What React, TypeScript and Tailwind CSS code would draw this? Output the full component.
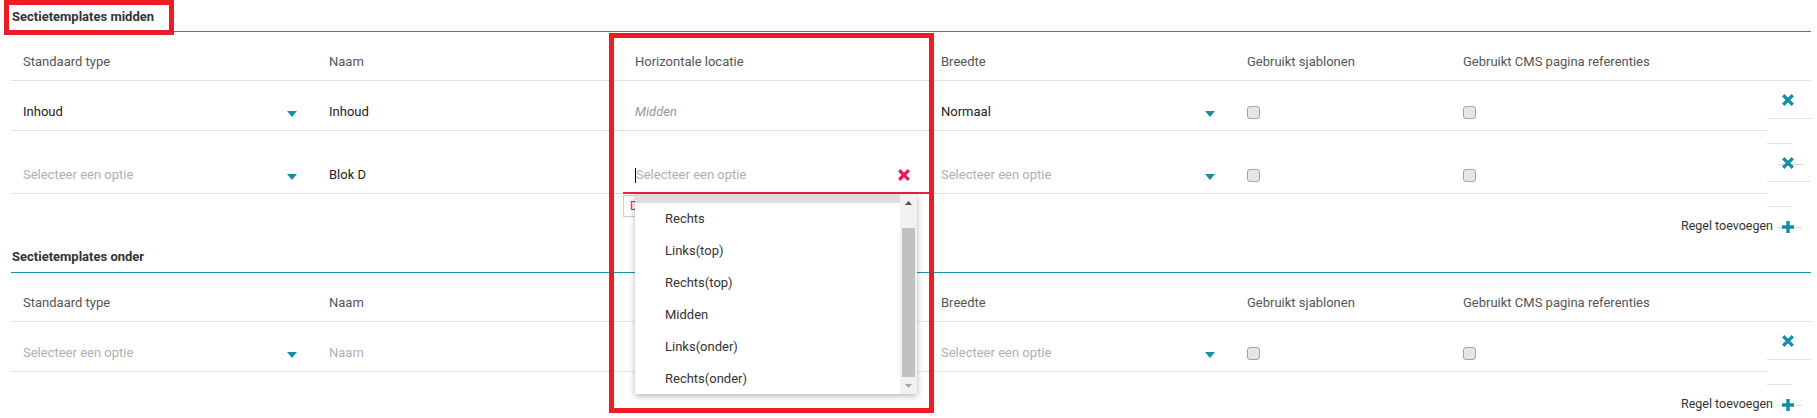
const HEADERS = [
  "Standaard type",
  "Naam",
  "Horizontale locatie",
  "Breedte",
  "Gebruikt sjablonen",
  "Gebruikt CMS pagina referenties",
];

const WIDTHS = ["w-[306px]", "w-[306px]", "w-[306px]", "w-[306px]", "w-[216px]", "w-[316px]"];

const OPTIONS = ["Links", "Rechts", "Links(top)", "Rechts(top)", "Midden", "Links(onder)", "Rechts(onder)"];

function Caret() {
  return (
    <span className="flex h-[20px] items-center pt-[3px]">
      <svg width="10" height="6" viewBox="0 0 10 6">
        <path d="M0 0h10L5 6z" fill="#178ea8" />
      </svg>
    </span>
  );
}

function TimesIcon({ color = "#178ea8" }: { color?: string }) {
  return (
    <svg width="12" height="12" viewBox="0 0 12 12" className="relative">
      <path d="M2.4 2.4l7.2 7.2M9.6 2.4l-7.2 7.2" stroke={color} strokeWidth="3.4" strokeLinecap="square" />
    </svg>
  );
}

function PlusIcon() {
  return (
    <svg width="12" height="12" viewBox="0 0 12 12" className="relative">
      <path d="M0 6h12M6 0v12" stroke="#178ea8" strokeWidth="3.4" />
    </svg>
  );
}

function Checkbox() {
  return (
    <span className="flex h-[20px] items-center">
      <span className="block h-[13px] w-[13px] rounded-[3px] border border-[#a4a4a4] bg-[#e6e6e6]" />
    </span>
  );
}

function Cell({ w, children, className = "" }: { w: string; children?: React.ReactNode; className?: string }) {
  return (
    <div className={`${w} flex h-full items-end justify-between border-b pb-[8px] pl-[12px] pr-[20px] leading-[20px] ${className}`}>
      {children}
    </div>
  );
}

function SelectCell({ w, value }: { w: string; value?: string }) {
  return (
    <Cell w={w} className="border-[#e0e0e0]">
      <span className={value ? "text-[#222]" : "text-[#b0b0b0]"}>{value ?? "Selecteer een optie"}</span>
      <Caret />
    </Cell>
  );
}

function CheckCell({ w }: { w: string }) {
  return (
    <Cell w={w} className="border-[#e0e0e0]">
      <Checkbox />
    </Cell>
  );
}

function SectionTitle({ title, first }: { title: string; first?: boolean }) {
  return (
    <>
      <div
        className={`flex items-end pl-[1px] font-bold leading-[20px] text-[#333] ${first ? "h-[31px] pb-[4px]" : "h-[26px] pb-[5px]"}`}
      >
        {title}
      </div>
      <div className="h-px bg-[#178ea8]" />
    </>
  );
}

function HeaderRow() {
  return (
    <div className="flex h-[49px] border-b border-[#e0e0e0]">
      {HEADERS.map((h, i) => (
        <div key={h} className={`${WIDTHS[i]} flex items-end pb-[8px] pl-[12px] leading-[20px] text-[#555]`}>
          {h}
        </div>
      ))}
    </div>
  );
}

function DeleteColumn({ count }: { count: number }) {
  return (
    <div className="flex w-[44px] flex-col">
      {Array.from({ length: count }).map((_, i) => (
        <div key={i}>
          <div className="relative flex h-[37px] items-center pl-[15px]">
            {i > 0 && <div className="absolute left-[11px] top-[20px] h-px w-[25px] bg-[#dcdcdc]" />}
            <TimesIcon />
          </div>
          <div className="h-px bg-[#e0e0e0]" />
          <div className="h-[24px]" />
          <div className="h-px w-[24px] bg-[#e0e0e0]" />
        </div>
      ))}
    </div>
  );
}

function AddRow() {
  return (
    <div className="flex h-[39px] items-center justify-end">
      <span className="text-[12.5px] text-[#333]">Regel toevoegen</span>
      <span className="relative ml-[9px] mr-[17px] flex">
        <span className="absolute left-[-5px] top-[6px] h-px w-[25px] bg-[#dcdcdc]" />
        <PlusIcon />
      </span>
    </div>
  );
}

function Dropdown() {
  return (
    <div className="absolute left-[12px] top-full z-20 flex h-[200px] w-[282px] bg-white shadow-[0_2px_6px_rgba(0,0,0,0.3)]">
      <div className="flex-1 overflow-hidden">
        <div className="-mt-[23px]">
          {OPTIONS.map((o, i) => (
            <div
              key={o}
              className={`flex h-[32px] items-center pl-[30px] text-[#333] ${i === 0 ? "bg-[#dddddd]" : ""}`}
            >
              {o}
            </div>
          ))}
        </div>
      </div>
      <div className="flex w-[17px] flex-col bg-[#f1f1f1]">
        <div className="flex h-[17px] items-center justify-center">
          <svg width="7" height="4" viewBox="0 0 7 4">
            <path d="M0 4h7L3.5 0z" fill="#505050" />
          </svg>
        </div>
        <div className="flex-1 px-[2px]">
          <div className="mt-[17px] h-[149px] bg-[#c1c1c1]" />
        </div>
        <div className="flex h-[17px] items-center justify-center">
          <svg width="7" height="4" viewBox="0 0 7 4">
            <path d="M0 0h7L3.5 4z" fill="#a3a3a3" />
          </svg>
        </div>
      </div>
    </div>
  );
}

export default function App() {
  return (
    <div className="relative h-[418px] w-[1817px] overflow-hidden bg-white font-['Roboto','Liberation_Sans',sans-serif] text-[13px]">
      <div className="w-[1811px] pl-[11px]">
        {/* Sectietemplates midden */}
        <SectionTitle title="Sectietemplates midden" first />
        <HeaderRow />
        <div className="flex">
          <div className="flex w-[1756px] flex-col">
            <div className="flex h-[50px]">
              <SelectCell w={WIDTHS[0]} value="Inhoud" />
              <Cell w={WIDTHS[1]} className="border-[#e0e0e0] text-[#222]">
                Inhoud
              </Cell>
              <Cell w={WIDTHS[2]} className="border-dotted border-[#c8c8c8] italic text-[#999]">
                Midden
              </Cell>
              <SelectCell w={WIDTHS[3]} value="Normaal" />
              <CheckCell w={WIDTHS[4]} />
              <CheckCell w={WIDTHS[5]} />
            </div>
            <div className="flex h-[63px]">
              <SelectCell w={WIDTHS[0]} />
              <Cell w={WIDTHS[1]} className="border-[#e0e0e0] text-[#222]">
                Blok D
              </Cell>
              <div className="relative w-[306px]">
                <div className="flex h-full items-end justify-between border-b-2 border-[#e91e4f] pb-[7px] pl-[12px] pr-[19px] leading-[20px]">
                  <span className="flex items-center">
                    <span className="h-[15px] w-px bg-black" />
                    <span className="text-[#b0b0b0]">Selecteer een optie</span>
                  </span>
                  <span className="flex h-[20px] items-center">
                    <TimesIcon color="#e91e4f" />
                  </span>
                </div>
                <div className="absolute left-0 top-full z-10 mt-[1px] h-[22px] w-[24px] overflow-hidden border border-[#cccccc] bg-white pl-[6px] text-[12px] leading-[20px] text-[#e91e4f]">
                  D
                </div>
                <Dropdown />
              </div>
              <SelectCell w={WIDTHS[3]} />
              <CheckCell w={WIDTHS[4]} />
              <CheckCell w={WIDTHS[5]} />
            </div>
          </div>
          <DeleteColumn count={2} />
        </div>
        <AddRow />

        {/* Sectietemplates onder */}
        <SectionTitle title="Sectietemplates onder" />
        <HeaderRow />
        <div className="flex">
          <div className="flex w-[1756px] flex-col">
            <div className="flex h-[50px]">
              <SelectCell w={WIDTHS[0]} />
              <Cell w={WIDTHS[1]} className="border-[#e0e0e0] text-[#b0b0b0]">
                Naam
              </Cell>
              <Cell w={WIDTHS[2]} className="border-[#e0e0e0]" />
              <SelectCell w={WIDTHS[3]} />
              <CheckCell w={WIDTHS[4]} />
              <CheckCell w={WIDTHS[5]} />
            </div>
          </div>
          <DeleteColumn count={1} />
        </div>
        <AddRow />
      </div>

      {/* annotation boxes */}
      <div className="pointer-events-none absolute left-[4px] top-0 z-30 h-[35px] w-[170px] border-[5px] border-[#ed1c24]" />
      <div className="pointer-events-none absolute left-[609px] top-[33px] z-30 h-[380px] w-[325px] border-[5px] border-[#ed1c24]" />
    </div>
  );
}
